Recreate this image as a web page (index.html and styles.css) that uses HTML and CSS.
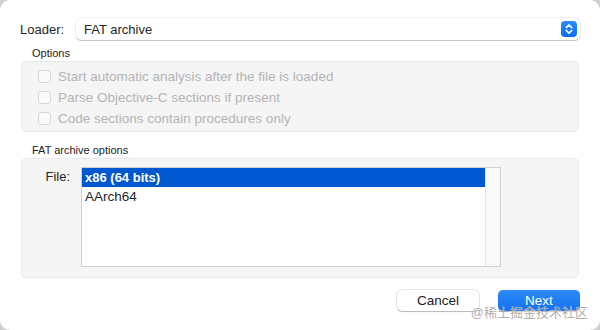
FILE: index.html
```html
<!DOCTYPE html>
<html lang="en">
<head>
  <meta charset="UTF-8">
  <title>Loader</title>
  <link rel="stylesheet" href="styles.css">
</head>
<body>
<div class="dialog">

  <div class="loaderRow">
    <div class="loaderLabel">Loader:</div>
    <div class="popup">
      <span class="popupText">FAT archive</span>
      <span class="stepper">
        <svg width="16" height="16" viewBox="0 0 16 16">
          <path d="M5.2 6.6 L8 3.9 L10.8 6.6" fill="none" stroke="#fff" stroke-width="1.5" stroke-linecap="round" stroke-linejoin="round"/>
          <path d="M5.2 9.4 L8 12.1 L10.8 9.4" fill="none" stroke="#fff" stroke-width="1.5" stroke-linecap="round" stroke-linejoin="round"/>
        </svg>
      </span>
    </div>
  </div>

  <div class="groupTitle">Options</div>
  <div class="groupBox options">
    <label class="check"><span class="box"></span>Start automatic analysis after the file is loaded</label>
    <label class="check"><span class="box"></span>Parse Objective-C sections if present</label>
    <label class="check"><span class="box"></span>Code sections contain procedures only</label>
  </div>

  <div class="groupTitle second">FAT archive options</div>
  <div class="groupBox fat">
    <div class="fileLabel">File:</div>
    <div class="list">
      <div class="rows">
        <div class="row selected">x86 (64 bits)</div>
        <div class="row">AArch64</div>
      </div>
      <div class="scrollTrack"></div>
    </div>
  </div>

  <div class="buttons">
    <button class="btn cancel">Cancel</button>
    <button class="btn next">Next</button>
  </div>

  <div class="watermark">@稀土掘金技术社区</div>
</div>
</body>
</html>
```

FILE: styles.css
```css
*{ box-sizing:border-box; }
html,body{
  margin:0; padding:0;
  width:600px; height:330px;
  overflow:hidden;
  background:#cfcfcf;
  font-family:'Liberation Sans', 'Noto Sans CJK SC', sans-serif;
  color:#262626;
}

.dialog{
  position:relative;
  width:600px; height:330px;
  background:#fff;
  border-radius:10px;
  padding:18px 20px 0 20px;
  display:flex; flex-direction:column;
}

/* ================= LOADER ================= */
.loaderRow{
  display:flex; align-items:center;
  height:22px;
}
.loaderLabel{
  width:56px;
  font-size:13px;
}
.popup{
  flex:1;
  height:22px;
  display:flex; align-items:center; justify-content:space-between;
  padding:0 3px 0 8px;
  background:#fff;
  border-radius:5px;
  box-shadow:0 0 0 .5px rgba(0,0,0,.12), 0 1px 1px rgba(0,0,0,.18);
  font-size:13px;
}
.stepper{
  width:16px; height:16px;
  border-radius:4px;
  background:linear-gradient(#2c8bf7,#0b6ef0);
  display:flex;
}

/* ================= GROUPS ================= */
.groupTitle{
  font-size:11px;
  padding-left:12px;
  margin-top:6px;
  height:14px;
  line-height:14px;
  color:#222;
}
.groupTitle.second{ margin-top:11px; }

.groupBox{
  margin:1px 1px 0 1px;
  background:#f5f5f5;
  border:1px solid #e9e9e9;
  border-radius:5px;
}

.options{
  height:71px;
  padding:4px 0 0 16px;
  display:flex; flex-direction:column;
}
.check{
  height:21px;
  display:flex; align-items:center; gap:7px;
  font-size:13.5px;
  color:#b4b4b4;
}
.box{
  width:13px; height:13px;
  border:1px solid #d6d6d6;
  border-radius:3px;
  background:#fafafa;
}

/* ================= FAT ================= */
.fat{
  height:120px;
  display:flex;
  padding:8px 0 0 0;
}
.fileLabel{
  width:59px;
  text-align:right;
  padding-right:11px;
  font-size:13px;
  line-height:19px;
}
.list{
  width:420px; height:100px;
  background:#fff;
  border:1px solid #cfcfcf;
  display:flex;
}
.rows{ flex:1; }
.row{
  height:19px;
  line-height:19px;
  padding-left:3px;
  font-size:13.5px;
  color:#262626;
}
.row.selected{
  background:#0058d0;
  color:#fff;
  font-weight:bold;
  font-size:13px;
}
.scrollTrack{
  width:15px;
  background:#f9f9f9;
  border-left:1px solid #e6e6e6;
}

/* ================= BUTTONS ================= */
.buttons{
  display:flex; justify-content:flex-end; gap:19px;
  margin-top:12px;
}
.btn{
  width:82px; height:21px;
  border:none;
  border-radius:5px;
  font-family:inherit;
  font-size:13.5px;
  padding:0 0 1px 0;
}
.cancel{
  background:#fff;
  color:#222;
  box-shadow:0 0 0 .5px rgba(0,0,0,.2), 0 1px 1px rgba(0,0,0,.2);
}
.next{
  background:linear-gradient(#2d8bf7,#1270f0);
  color:#fff;
  box-shadow:0 .5px 1px rgba(0,0,0,.2);
}

.watermark{
  position:absolute;
  right:12px; bottom:9px;
  font-size:13px;
  color:rgba(160,160,160,.85);
  text-shadow:0 0 1px rgba(255,255,255,.8);
}
```
